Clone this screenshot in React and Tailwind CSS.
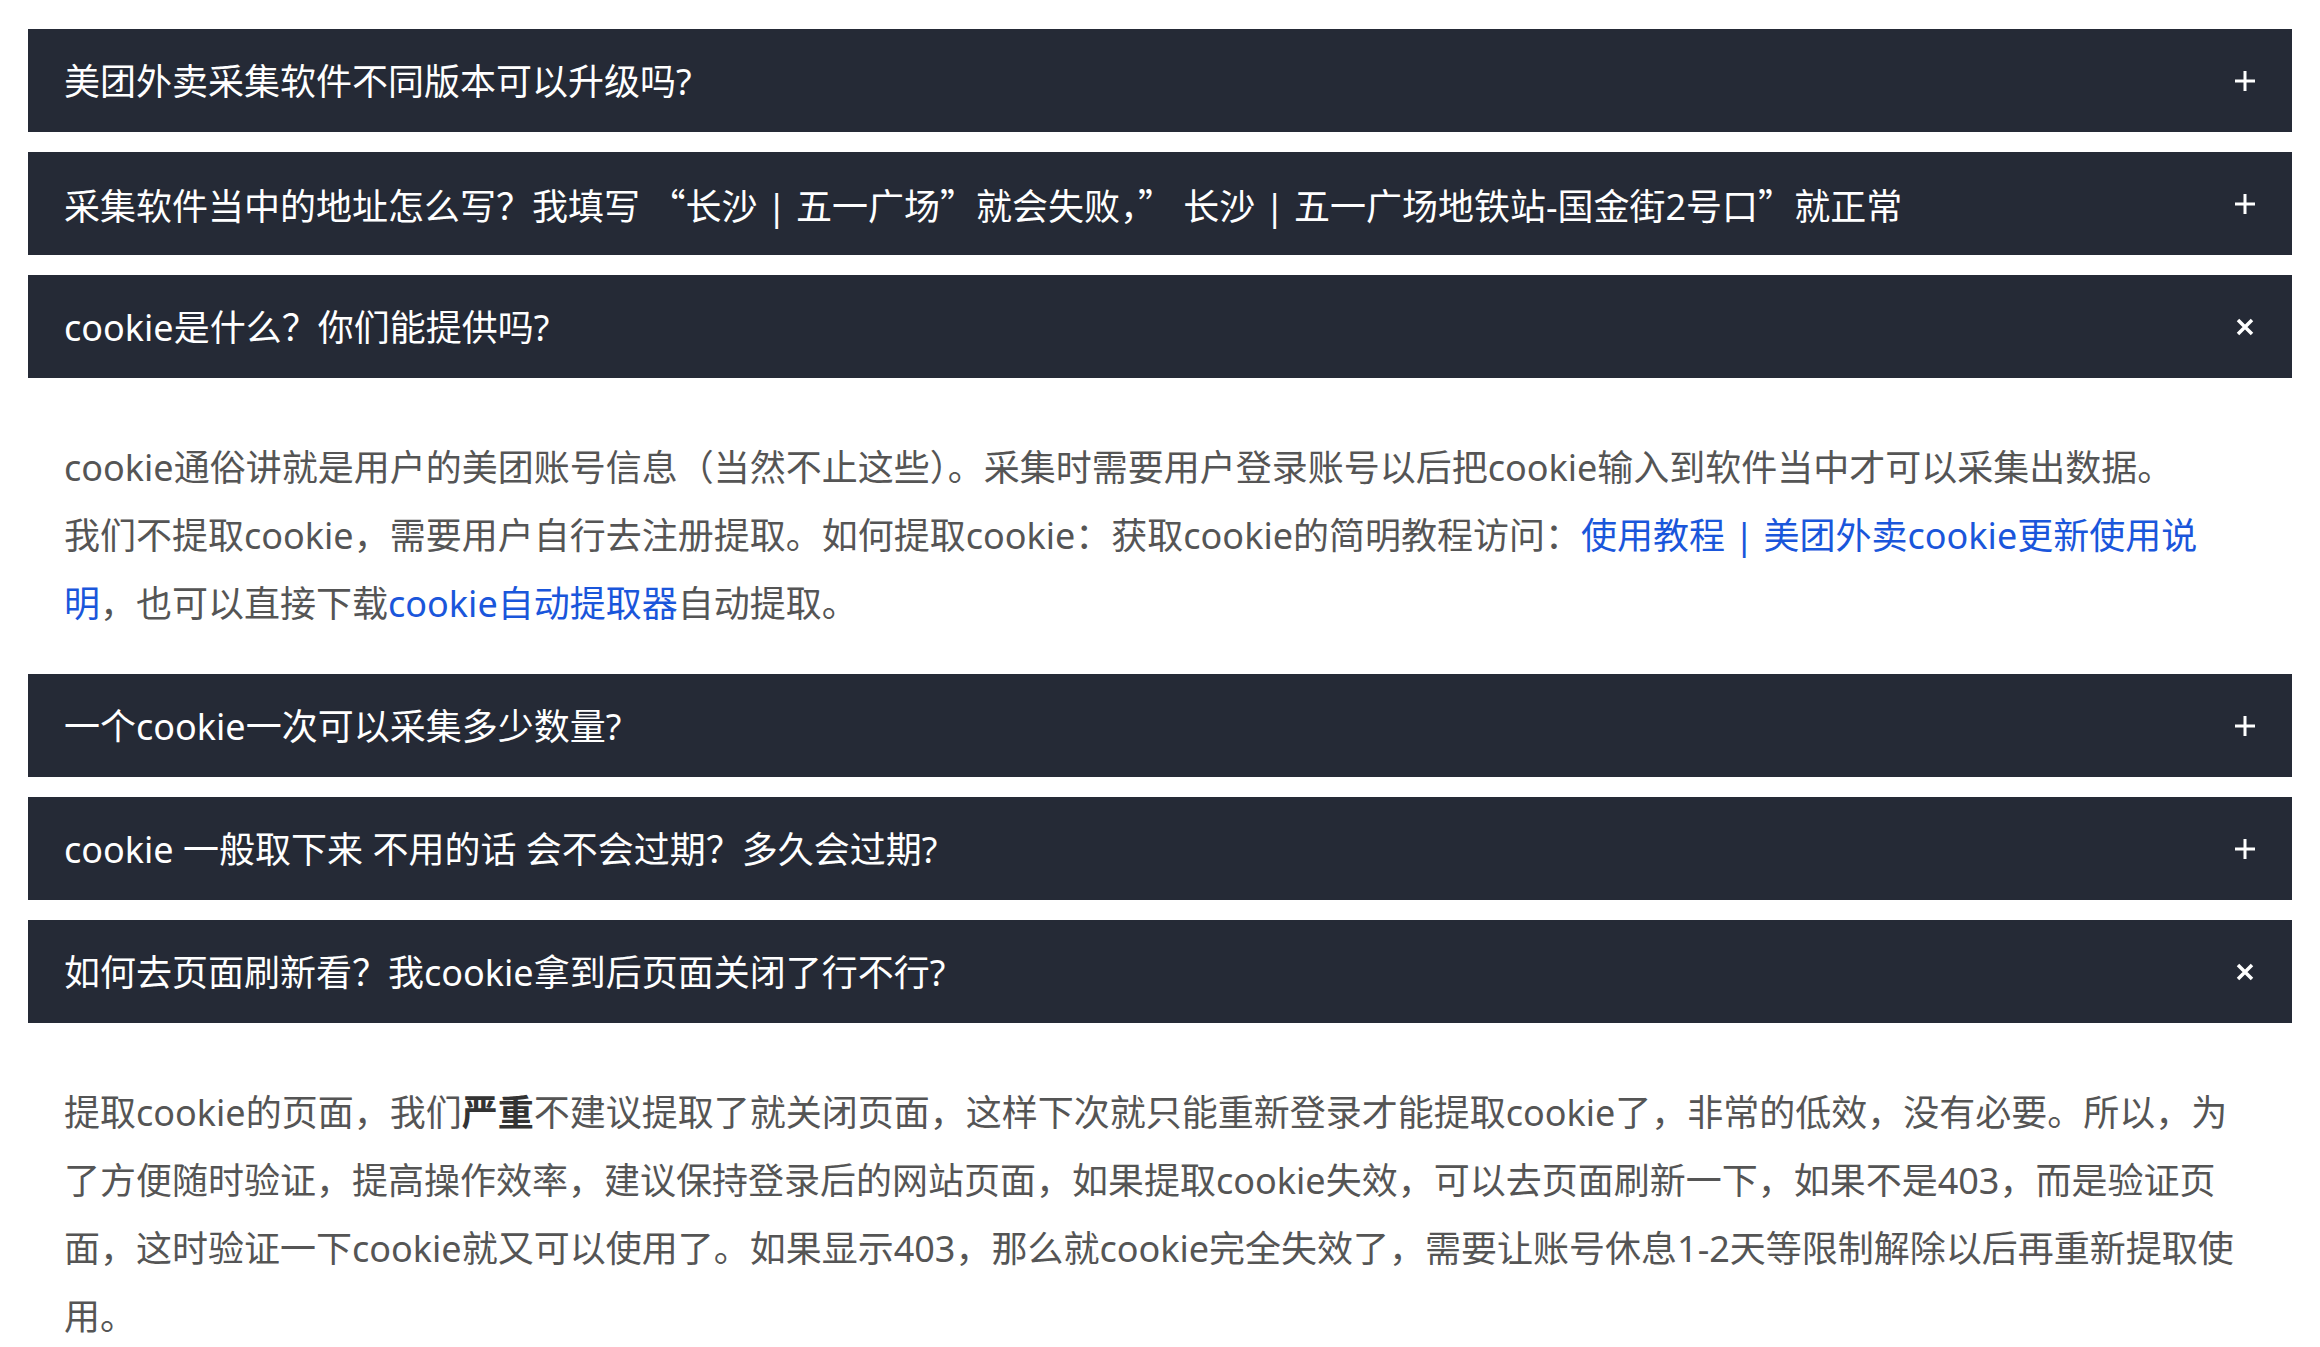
import React, { useState } from 'react';

// curly quotes drawn full width, as the CJK font does
const Q = ({ children }) => (
    <span style={{ fontFamily: '"Noto Sans CJK SC", sans-serif' }}>{children}</span>
);

const faqs = [
    {
        id: 1,
        q: '美团外卖采集软件不同版本可以升级吗?',
    },
    {
        id: 2,
        q: (
            <>
                采集软件当中的地址怎么写？我填写 <Q>“</Q>长沙 | 五一广场<Q>”</Q>就会失败，<Q>”</Q> 长沙 | 五一广场地铁站-国金街2号口<Q>”</Q>就正常
            </>
        ),
    },
    {
        id: 3,
        q: 'cookie是什么？你们能提供吗?',
        a: (
            <>
                cookie通俗讲就是用户的美团账号信息（当然不止这些）。采集时需要用户登录账号以后把cookie输入到软件当中才可以采集出数据。
                <br />
                我们不提取cookie，需要用户自行去注册提取。如何提取cookie：获取cookie的简明教程访问：
                <a href="#" className="text-[#1a56db]">使用教程 | 美团外卖cookie更新使用说明</a>
                ，也可以直接下载
                <a href="#" className="text-[#1a56db]">cookie自动提取器</a>
                自动提取。
            </>
        ),
    },
    {
        id: 4,
        q: '一个cookie一次可以采集多少数量?',
    },
    {
        id: 5,
        q: 'cookie 一般取下来 不用的话 会不会过期？多久会过期?',
    },
    {
        id: 6,
        q: '如何去页面刷新看？我cookie拿到后页面关闭了行不行?',
        a: (
            <>
                提取cookie的页面，我们<strong className="font-bold text-[#333]">严重</strong>不建议提取了就关闭页面，这样下次就只能重新登录才能提取cookie了，非常的低效，没有必要。所以，为了方便随时验证，提高操作效率，建议保持登录后的网站页面，如果提取cookie失效，可以去页面刷新一下，如果不是403，而是验证页面，这时验证一下cookie就又可以使用了。如果显示403，那么就cookie完全失效了，需要让账号休息1-2天等限制解除以后再重新提取使用。
            </>
        ),
    },
];

function PlusIcon() {
    return (
        <svg width="22" height="22" viewBox="0 0 22 22" className="shrink-0">
            <path d="M11 1v20M1 11h20" stroke="#fff" strokeWidth="3" />
        </svg>
    );
}

function CloseIcon() {
    return (
        <svg width="22" height="22" viewBox="0 0 22 22" className="shrink-0">
            <path d="M4 4l14 14M18 4L4 18" stroke="#fff" strokeWidth="3.5" />
        </svg>
    );
}

export default function App() {
    const [open, setOpen] = useState({ 3: true, 6: true });

    const toggle = (id) => setOpen(prev => ({ ...prev, [id]: !prev[id] }));

    return (
        <div
            className="min-h-screen bg-white px-[28px] pt-[29px] pb-10"
            style={{ fontFamily: '"Noto Sans", "Noto Sans CJK SC", sans-serif' }}
        >
            <div className="flex flex-col gap-[20px]">
                {faqs.map((item) => (
                    <div key={item.id}>
                        {/* Question bar */}
                        <button
                            className="w-full h-[103px] flex items-center justify-between px-[36px] bg-[#252a36] text-white text-[36px] text-left"
                            onClick={() => toggle(item.id)}
                        >
                            <span className="leading-none pt-[3px]">{item.q}</span>
                            {open[item.id] && item.a ? <CloseIcon /> : <PlusIcon />}
                        </button>

                        {/* Answer */}
                        {open[item.id] && item.a && (
                            <div className="px-[36px] pt-[56px] pb-[16px] text-[36px] leading-[68px] text-[#555]">
                                {item.a}
                            </div>
                        )}
                    </div>
                ))}
            </div>
        </div>
    );
}
